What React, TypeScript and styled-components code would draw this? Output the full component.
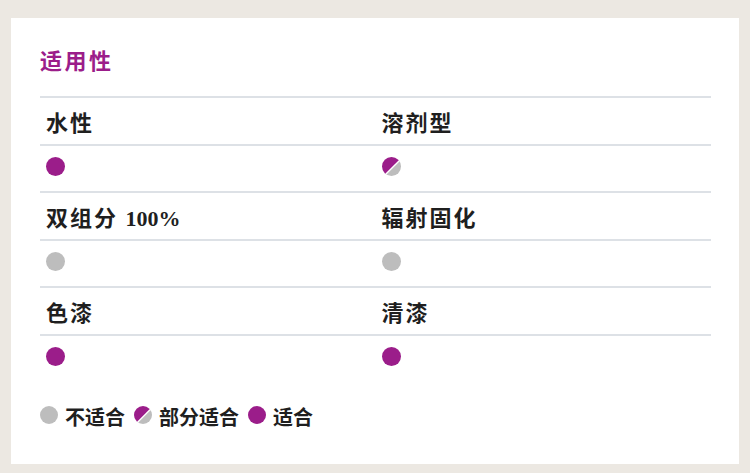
import styled, { createGlobalStyle } from 'styled-components';

const GlobalStyle = createGlobalStyle`
  body {
    margin: 0;
    background-color: #ece8e2;
    font-family: "Liberation Serif", "Noto Sans CJK SC", serif;
  }
`;

const Page = styled.div`
  padding: 18px 11px 14px;
`;

const Card = styled.div`
  background-color: #fff;
  padding: 30px 28px 33px 29px;
`;

const Title = styled.h2`
  margin: 0 0 20px;
  font-size: 22px;
  line-height: 28px;
  font-weight: 700;
  letter-spacing: 2.5px;
  color: #9b1d8a;
`;

const Grid = styled.div`
  display: grid;
  grid-template-columns: 1fr 1fr;
`;

const Cell = styled.div`
  display: flex;
  align-items: center;
  height: 45.5px;
  padding-left: 6px;
  border-top: 2px solid #dde1e6;
`;

const Label = styled.span`
  font-size: 22px;
  font-weight: 700;
  letter-spacing: 2px;
  color: #1f1f1f;
  padding-top: 1px;
`;

const Latin = styled.span`
  letter-spacing: 0;
`;

const DotWrap = styled.span<{ $size: number }>`
  display: inline-flex;
  flex-shrink: 0;
  width: ${(p) => p.$size}px;
  height: ${(p) => p.$size}px;
  margin-top: -3px;
`;

const Legend = styled.div`
  display: flex;
  align-items: center;
  margin-top: 21px;
`;

const LegendItem = styled.span`
  display: inline-flex;
  align-items: center;
  gap: 7px;
  margin-right: 9px;
  font-size: 20px;
  font-weight: 700;
  color: #1f1f1f;
`;

type Fit = 'yes' | 'no' | 'partial';

const PURPLE = '#9b1d8a';
const GREY = '#bdbdbd';

const Dot = ({ fit, size = 19 }: { fit: Fit; size?: number }) => {
  if (fit !== 'partial') {
    return (
      <DotWrap $size={size}>
        <svg width={size} height={size} viewBox="0 0 20 20">
          <circle cx="10" cy="10" r="10" fill={fit === 'yes' ? PURPLE : GREY} />
        </svg>
      </DotWrap>
    );
  }
  const id = `clip-${size}`;
  return (
    <DotWrap $size={size}>
      <svg width={size} height={size} viewBox="0 0 20 20">
        <defs>
          <clipPath id={id}>
            <circle cx="10" cy="10" r="10" />
          </clipPath>
        </defs>
        <g clipPath={`url(#${id})`}>
          <polygon points="0,0 22,0 0,22" fill={PURPLE} />
          <polygon points="22,0 22,22 0,22" fill={GREY} />
          <line x1="-1" y1="23" x2="23" y2="-1" stroke="#fff" strokeWidth="1.5" />
        </g>
      </svg>
    </DotWrap>
  );
};

const rows: { a: React.ReactNode; b: string; fa: Fit; fb: Fit }[] = [
  { a: '水性', b: '溶剂型', fa: 'yes', fb: 'partial' },
  {
    a: (
      <>
        双组分 <Latin>100%</Latin>
      </>
    ),
    b: '辐射固化',
    fa: 'no',
    fb: 'no',
  },
  { a: '色漆', b: '清漆', fa: 'yes', fb: 'yes' },
];

export default function App() {
  return (
    <>
      <GlobalStyle />
      <Page>
        <Card>
          <Title>适用性</Title>
          <Grid>
            {rows.flatMap((r) => [
              <Cell key={r.b + '-a'}>
                <Label>{r.a}</Label>
              </Cell>,
              <Cell key={r.b}>
                <Label>{r.b}</Label>
              </Cell>,
              <Cell key={r.b + '-da'}>
                <Dot fit={r.fa} />
              </Cell>,
              <Cell key={r.b + '-db'}>
                <Dot fit={r.fb} />
              </Cell>,
            ])}
          </Grid>
          <Legend>
            <LegendItem>
              <Dot fit="no" size={18} />
              不适合
            </LegendItem>
            <LegendItem>
              <Dot fit="partial" size={18} />
              部分适合
            </LegendItem>
            <LegendItem>
              <Dot fit="yes" size={18} />
              适合
            </LegendItem>
          </Legend>
        </Card>
      </Page>
    </>
  );
}
